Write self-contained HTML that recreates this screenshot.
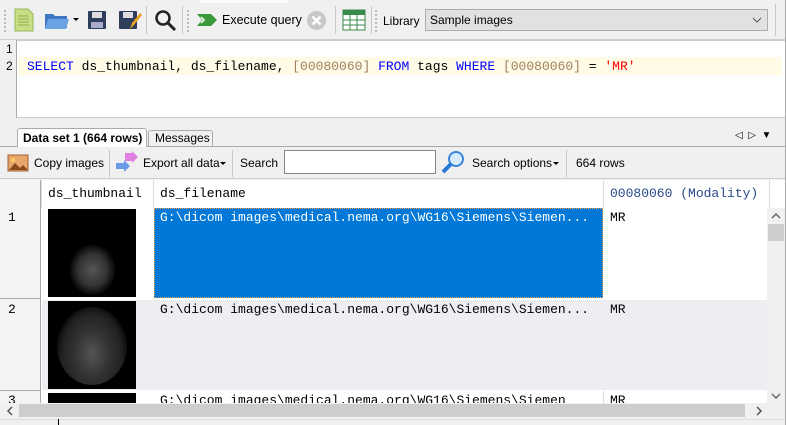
<!DOCTYPE html>
<html><head><style>
*{margin:0;padding:0;box-sizing:border-box}
body{width:786px;height:425px;overflow:hidden;background:#f0f0f0;font-family:"Liberation Sans",sans-serif;font-size:12px;color:#000;position:relative}
.a{position:absolute}
.m{font-family:"Liberation Mono",monospace;font-size:13px;white-space:pre}
.sep{position:absolute;width:1px;background:#c8c8c8}
.grip{position:absolute;width:2px;border-left:2px dotted #bbb}
</style></head><body>
<!-- top toolbar -->
<div class="a" style="left:0;top:0;width:786px;height:40px;background:#f0f0f0;border-bottom:1px solid #ccc"></div>
<div class="a" style="left:200px;top:0;width:88px;height:3px;background:#fafafa"></div>
<div class="grip" style="left:4px;top:10px;height:22px"></div>
<svg class="a" style="left:14px;top:8px" width="20" height="24"><path d="M1 1h13l5 5v17H1z" fill="#c8dd86" stroke="#9ab85a"/><path d="M4 8h11M4 11h11M4 14h11M4 17h11" stroke="#8fae4a"/></svg>
<svg class="a" style="left:44px;top:10px" width="26" height="20"><path d="M1 4h8l2 2h12v12H1z" fill="#3e77c4"/><path d="M4 9h21l-3 10H1z" fill="#6aa2e2"/></svg>
<div class="a" style="left:73px;top:18px;border:3px solid transparent;border-top:3px solid #000"></div>
<svg class="a" style="left:87px;top:10px" width="20" height="20"><rect x="1" y="1" width="18" height="18" rx="1" fill="#2d3d5a"/><rect x="5" y="2" width="10" height="6" fill="#ddd"/><rect x="4" y="12" width="12" height="6" fill="#aac"/></svg>
<svg class="a" style="left:118px;top:9px" width="24" height="22"><rect x="1" y="2" width="18" height="18" rx="1" fill="#2d3d5a"/><rect x="5" y="3" width="10" height="6" fill="#ddd"/><path d="M12 20l2-6 8-10 2 2-8 10z" fill="#e8a020"/></svg>
<div class="sep" style="left:146px;top:6px;height:28px"></div>
<svg class="a" style="left:154px;top:9px" width="24" height="24"><circle cx="9" cy="9" r="6.5" fill="none" stroke="#222" stroke-width="2.5"/><path d="M14 14l7 7" stroke="#222" stroke-width="3"/></svg>
<div class="sep" style="left:182px;top:6px;height:28px"></div>
<div class="grip" style="left:187px;top:10px;height:22px"></div>
<svg class="a" style="left:196px;top:12px" width="22" height="16"><path d="M1 2h14l6 6-6 6H1l5-6z" fill="#3c9a3c"/><path d="M5 5l3 3-3 3" stroke="#fff" stroke-width="1.5" fill="none"/></svg>
<div class="a" style="left:222px;top:13px;font-size:12.5px">Execute query</div>
<svg class="a" style="left:306px;top:10px" width="21" height="21"><circle cx="10.5" cy="10.5" r="9.5" fill="#c8c8c8"/><path d="M6.5 6.5l8 8M14.5 6.5l-8 8" stroke="#fff" stroke-width="2.5"/></svg>
<div class="sep" style="left:335px;top:6px;height:28px"></div>
<svg class="a" style="left:342px;top:9px" width="24" height="22"><rect x="1" y="1" width="22" height="20" fill="#fff" stroke="#3a8a4a"/><rect x="1" y="1" width="22" height="5" fill="#3a8a4a"/><path d="M1 11h22M1 16h22M8 1v20M15 1v20" stroke="#3a8a4a"/></svg>
<div class="sep" style="left:371px;top:6px;height:28px"></div>
<div class="grip" style="left:375px;top:10px;height:22px"></div>
<div class="a" style="left:383px;top:14px;font-size:12px">Library</div>
<div class="a" style="left:425px;top:9px;width:343px;height:22px;background:#e1e1e1;border:1px solid #adadad"></div>
<div class="a" style="left:430px;top:13px;font-size:12px">Sample images</div>
<svg class="a" style="left:752px;top:16px" width="10" height="8"><path d="M1 2l4 4 4-4" stroke="#555" fill="none"/></svg>
<div class="sep" style="left:775px;top:4px;height:32px"></div>
<!-- editor -->
<div class="a" style="left:0;top:40px;width:786px;height:78px;background:#fff;border-top:1px solid #ccc;border-bottom:1px solid #ccc"></div>
<div class="a" style="left:0;top:40px;width:17px;height:78px;background:#f0f0f0;border-right:1px solid #aaa"></div>
<div class="a" style="left:18px;top:57px;width:764px;height:18px;background:#fffbe6"></div>
<div class="a" style="left:6px;top:42px;font-size:12px">1</div>
<div class="a" style="left:6px;top:59px;font-size:12px">2</div>
<div class="a m" style="left:27px;top:59px"><span style="color:#0000ff">SELECT</span> ds_thumbnail, ds_filename, <span style="color:#a08060">[00080060]</span> <span style="color:#0000ff">FROM</span> tags <span style="color:#0000ff">WHERE</span> <span style="color:#a08060">[00080060]</span> = <span style="color:#ff0000">'MR'</span></div>
<!-- tabs -->
<div class="a" style="left:0;top:146px;width:786px;height:1px;background:#aaa"></div>
<div class="a" style="left:17px;top:128px;width:130px;height:19px;background:#fff;border:1px solid #aaa;border-bottom:none;border-radius:3px 3px 0 0"></div>
<div class="a" style="left:23px;top:131px;font-weight:bold;font-size:12px">Data set 1 (664 rows)</div>
<div class="a" style="left:148px;top:130px;width:65px;height:16px;background:#f0f0f0;border:1px solid #aaa;border-bottom:none;border-radius:3px 3px 0 0"></div>
<div class="a" style="left:155px;top:131px;font-size:12px">Messages</div>
<div class="a" style="left:735px;top:130px;font-size:10px">◁&nbsp;&nbsp;▷&nbsp;&nbsp;▼</div>
<!-- toolbar 2 -->
<div class="a" style="left:0;top:147px;width:786px;height:32px;background:#f0f0f0;border-bottom:1px solid #ccc"></div>
<svg class="a" style="left:7px;top:154px" width="22" height="18"><rect x="1" y="1" width="20" height="16" fill="#e9a66a" stroke="#a06030"/><path d="M2 16l6-7 5 5 3-3 5 5z" fill="#8a4a20"/><circle cx="6" cy="6" r="2" fill="#ffd060"/></svg>
<div class="a" style="left:34px;top:156px">Copy images</div>
<div class="sep" style="left:109px;top:150px;height:27px"></div>
<svg class="a" style="left:115px;top:151px" width="24" height="24"><path d="M10 2l7 0 0-2 6 6-6 6 0-2-7 0z" fill="#e080e0"/><path d="M1 12h8v-3l6 6-6 6v-3H1z" fill="#6a9ae8"/></svg>
<div class="a" style="left:143px;top:156px">Export all data</div>
<div class="a" style="left:220px;top:162px;border:3px solid transparent;border-top:3px solid #000"></div>
<div class="sep" style="left:232px;top:150px;height:27px"></div>
<div class="a" style="left:240px;top:156px">Search</div>
<div class="a" style="left:284px;top:150px;width:152px;height:24px;background:#fff;border:1px solid #888"></div>
<svg class="a" style="left:440px;top:150px" width="26" height="26"><circle cx="16" cy="9" r="7" fill="#d8ecff" stroke="#3a86d8" stroke-width="2"/><path d="M11 14l-8 8" stroke="#2a76d8" stroke-width="4"/></svg>
<div class="a" style="left:472px;top:156px">Search options</div>
<div class="a" style="left:553px;top:162px;border:3px solid transparent;border-top:3px solid #000"></div>
<div class="sep" style="left:566px;top:150px;height:27px"></div>
<div class="a" style="left:576px;top:156px">664 rows</div>
<!-- grid -->
<div class="a" style="left:0;top:180px;width:786px;height:245px;background:#fff"></div>
<div class="a" style="left:0;top:180px;width:41px;height:223px;background:#f4f4f4;border-right:1px solid #aaa"></div>
<div class="a" style="left:41px;top:180px;width:1px;height:28px;background:#ddd"></div>
<div class="a" style="left:153px;top:180px;width:1px;height:28px;background:#ddd"></div>
<div class="a" style="left:603px;top:180px;width:1px;height:28px;background:#ddd"></div>
<div class="a" style="left:769px;top:180px;width:1px;height:28px;background:#ddd"></div>
<div class="a m" style="left:48px;top:186px">ds_thumbnail</div>
<div class="a m" style="left:160px;top:186px">ds_filename</div>
<div class="a m" style="left:610px;top:186px;color:#2a4a8a">00080060 (Modality)</div>
<!-- row1 -->
<div class="a" style="left:0;top:208px;width:41px;height:91px;border-bottom:1px solid #aaa"></div>
<div class="a m" style="left:8px;top:210px">1</div>
<div class="a" style="left:48px;top:209px;width:88px;height:88px;background:#000"></div>
<div class="a" style="left:70px;top:245px;width:45px;height:50px;border-radius:45%;background:radial-gradient(ellipse at 50% 50%,#555 0,#333 45%,#000 75%)"></div>
<div class="a" style="left:154px;top:208px;width:449px;height:90px;background:#0078d7;border:1px dotted #f0a050"></div>
<div class="a m" style="left:160px;top:210px;color:#fff">G:\dicom images\medical.nema.org\WG16\Siemens\Siemen...</div>
<div class="a m" style="left:610px;top:210px">MR</div>
<!-- row2 -->
<div class="a" style="left:42px;top:300px;width:725px;height:90px;background:#eeeef2"></div>
<div class="a" style="left:0;top:299px;width:41px;height:92px;border-bottom:1px solid #aaa"></div>
<div class="a m" style="left:8px;top:302px">2</div>
<div class="a" style="left:48px;top:301px;width:88px;height:88px;background:#000"></div>
<div class="a" style="left:57px;top:307px;width:70px;height:78px;border-radius:50%;background:radial-gradient(ellipse at 50% 60%,#555 0,#333 35%,#222 60%,#111 70%,#000 75%)"></div>
<div class="a m" style="left:160px;top:302px">G:\dicom images\medical.nema.org\WG16\Siemens\Siemen...</div>
<div class="a m" style="left:610px;top:302px">MR</div>
<!-- row3 -->
<div class="a m" style="left:8px;top:393px">3</div>
<div class="a" style="left:48px;top:393px;width:88px;height:10px;background:#000"></div>
<div class="a m" style="left:160px;top:393px">G:\dicom images\medical.nema.org\WG16\Siemens\Siemen</div>
<div class="a m" style="left:610px;top:393px">MR</div>
<div class="a" style="left:603px;top:391px;width:1px;height:12px;background:#ddd"></div>
<!-- vertical scrollbar -->
<div class="a" style="left:767px;top:208px;width:18px;height:195px;background:#f0f0f0"></div>
<div class="a" style="left:768px;top:224px;width:16px;height:17px;background:#cdcdcd"></div>
<svg class="a" style="left:771px;top:212px" width="10" height="8"><path d="M1 6l4-4 4 4" stroke="#666" fill="none" stroke-width="1.5"/></svg>
<svg class="a" style="left:771px;top:392px" width="10" height="8"><path d="M1 2l4 4 4-4" stroke="#666" fill="none" stroke-width="1.5"/></svg>
<!-- horizontal scrollbar -->
<div class="a" style="left:0;top:403px;width:786px;height:16px;background:#f0f0f0"></div>
<div class="a" style="left:19px;top:404px;width:726px;height:13px;background:#cdcdcd"></div>
<svg class="a" style="left:6px;top:406px" width="8" height="10"><path d="M6 1L2 5l4 4" stroke="#555" fill="none" stroke-width="1.5"/></svg>
<svg class="a" style="left:755px;top:406px" width="8" height="10"><path d="M2 1l4 4-4 4" stroke="#555" fill="none" stroke-width="1.5"/></svg>
<div class="a" style="left:0;top:419px;width:786px;height:6px;background:#f0f0f0;border-top:1px solid #ddd"></div>
<div class="a" style="left:58px;top:419px;width:1px;height:6px;background:#000"></div>
<div class="a" style="left:785px;top:0;width:1px;height:425px;background:#aaa"></div>
</body></html>
